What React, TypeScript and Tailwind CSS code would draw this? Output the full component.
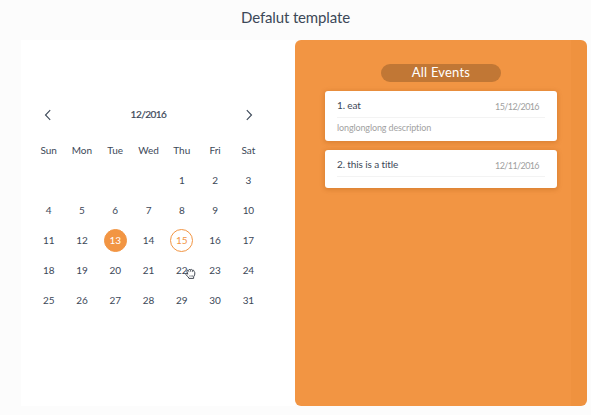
const weekdays = ["Sun", "Mon", "Tue", "Wed", "Thu", "Fri", "Sat"];
const days = Array.from({ length: 31 }, (_, i) => i + 1);

function Chevron({ d }: { d: string }) {
  return (
    <svg width="8" height="12" viewBox="0 0 8 12" fill="none" stroke="#3c4858" strokeWidth="1.1">
      <path d={d} />
    </svg>
  );
}

function HandCursor() {
  return (
    <svg
      className="absolute left-[14px] top-[8px]"
      width="11"
      height="12"
      viewBox="0 0 12 12"
      fill="#fff"
      stroke="#303844"
      strokeWidth="1"
      strokeLinejoin="round"
    >
      <path d="M2.7 5.2 2 2.8Q2.3 1.2 3.7 2Q4.5.3 5.8 1.4Q7.2.4 8 1.8Q9.7 1.4 9.9 3Q11.3 4.3 10.5 7L9.4 9.1V10.8H4.3L3.5 9.2.8 6.5Q.5 5.1 2 5.3L3.3 6.2Z" />
      <path d="m3.7 2 .7 2M5.8 1.4l.5 2.3M8 1.8l.2 2.1M5.3 7.5v1.4M6.8 7.5v1.4M8.2 7.5v1.4" strokeWidth=".7" />
    </svg>
  );
}

function Day({ day }: { day: number }) {
  const look =
    day === 13
      ? "border-[#f29543] bg-[#f29543] text-white"
      : day === 15
        ? "border-[#f29543] text-[#f29543]"
        : "border-transparent";
  return (
    <div className="flex h-[30px] items-center justify-center">
      <div
        className={`relative flex size-[23px] items-center justify-center rounded-full border text-[10px] tracking-[-0.1px] ${look}`}
      >
        {day}
        {day === 22 && <HandCursor />}
      </div>
    </div>
  );
}

function EventCard({ title, date, children }: { title: string; date: string; children?: string }) {
  return (
    <article className="rounded-[3px] bg-white px-3 shadow-[0_1px_4px_1px_rgba(160,80,10,0.28)]">
      <header className="flex h-[27px] items-center justify-between border-b border-[#f3f3f3] pt-[3px] pr-[6px]">
        <h2 className="text-[10px] tracking-[-0.12px] text-[#3c4858]">{title}</h2>
        <span className="pt-[3px] text-[9px] tracking-[-0.6px] text-[#a0a0a0]">{date}</span>
      </header>
      {children ? (
        <p className="h-[23px] pt-[3px] text-[9px] leading-[14px] tracking-[-0.12px] text-[#a2a2a2]">{children}</p>
      ) : (
        <div className="h-[11px]" />
      )}
    </article>
  );
}

export default function App() {
  return (
    <main className="flex h-[415px] w-[591px] flex-col overflow-hidden bg-[#fcfcfc] font-['Lato',sans-serif] text-[#3c4858]">
      <h1 className="h-10 shrink-0 pt-[5px] text-center text-[15px] leading-6 tracking-[-0.14px]">Defalut template</h1>
      <div className="ml-[21px] flex h-[366px] w-[566px]">
        <section className="w-[274px] bg-white pt-[60px] pl-[11px]">
          <div className="flex h-[30px] w-[233px] items-center justify-between px-[12px]">
            <Chevron d="M6.2 1.2 1.5 6l4.7 4.8" />
            <span className="pb-[2px] text-[10px] tracking-[-0.5px] [-webkit-text-stroke:0.2px]">12/2016</span>
            <Chevron d="M1.8 1.2 6.5 6l-4.7 4.8" />
          </div>
          <div className="mt-[5px] grid w-[233px] grid-cols-7">
            {weekdays.map((d) => (
              <div key={d} className="flex h-[30px] items-center justify-center text-[10px]">
                {d}
              </div>
            ))}
            <div className="col-span-4" />
            {days.map((d) => (
              <Day key={d} day={d} />
            ))}
          </div>
        </section>
        <section className="w-[292px] rounded-[6px] bg-[linear-gradient(to_right,#f29543_276px,#ef923f_276px)] px-[30px] pt-6">
          <div className="mx-auto flex h-[18px] w-[120px] items-center justify-center rounded-full bg-[#c17735] text-[13px] tracking-[0.2px] text-white">
            All Events
          </div>
          <div className="mt-[9px] flex flex-col gap-[9px]">
            <EventCard title="1. eat" date="15/12/2016">
              longlonglong description
            </EventCard>
            <EventCard title="2. this is a title" date="12/11/2016" />
          </div>
        </section>
      </div>
    </main>
  );
}
